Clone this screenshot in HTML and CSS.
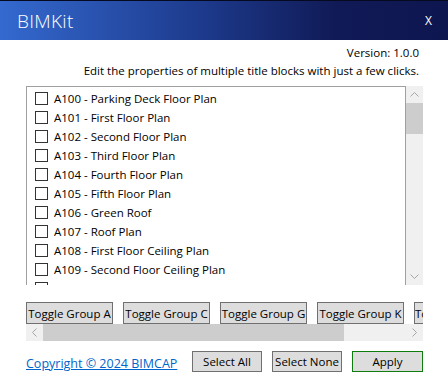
FILE: index.html
```html
<!DOCTYPE html>
<html lang="en">
<head>
  <meta charset="UTF-8">
  <title>BIMKit</title>
  <link rel="stylesheet" href="styles.css">
</head>
<body>

<header class="titlebar">
  <span class="app-name">BIMKit</span>
  <span class="close">X</span>
</header>

<main class="content">
  <div class="info">
    <p>Version: 1.0.0</p>
    <p>Edit the properties of multiple title blocks with just a few clicks.</p>
  </div>

  <div class="sheets">
    <ul class="sheet-list">
      <li><span class="box"></span>A100 - Parking Deck Floor Plan</li>
      <li><span class="box"></span>A101 - First Floor Plan</li>
      <li><span class="box"></span>A102 - Second Floor Plan</li>
      <li><span class="box"></span>A103 - Third Floor Plan</li>
      <li><span class="box"></span>A104 - Fourth Floor Plan</li>
      <li><span class="box"></span>A105 - Fifth Floor Plan</li>
      <li><span class="box"></span>A106 - Green Roof</li>
      <li><span class="box"></span>A107 - Roof Plan</li>
      <li><span class="box"></span>A108 - First Floor Ceiling Plan</li>
      <li><span class="box"></span>A109 - Second Floor Ceiling Plan</li>
      <li><span class="box"></span>A110 - Third Floor Ceiling Plan</li>
      <li><span class="box"></span>A111 - Fourth Floor Ceiling Plan</li>
    </ul>
    <div class="vscroll">
      <span class="arrow"><svg width="9" height="5" viewBox="0 0 9 5"><path d="M0.5 4.5 L4.5 0.5 L8.5 4.5" fill="none" stroke="#a6a6a6"/></svg></span>
      <span class="vthumb"></span>
      <span class="vtrack"></span>
      <span class="arrow"><svg width="9" height="5" viewBox="0 0 9 5"><path d="M0.5 0.5 L4.5 4.5 L8.5 0.5" fill="none" stroke="#a6a6a6"/></svg></span>
    </div>
  </div>

  <div class="groups">
    <div class="group-row">
      <button class="btn toggle">Toggle Group A</button>
      <button class="btn toggle">Toggle Group C</button>
      <button class="btn toggle">Toggle Group G</button>
      <button class="btn toggle">Toggle Group K</button>
      <button class="btn toggle">Toggle Group M</button>
    </div>
    <div class="hscroll">
      <span class="arrow"><svg width="5" height="9" viewBox="0 0 5 9"><path d="M4.5 0.5 L0.5 4.5 L4.5 8.5" fill="none" stroke="#a6a6a6"/></svg></span>
      <span class="hthumb"></span>
      <span class="htrack"></span>
      <span class="arrow"><svg width="5" height="9" viewBox="0 0 5 9"><path d="M0.5 0.5 L4.5 4.5 L0.5 8.5" fill="none" stroke="#a6a6a6"/></svg></span>
    </div>
  </div>

  <footer class="actions">
    <a href="#" class="copyright">Copyright © 2024 BIMCAP</a>
    <div class="action-buttons">
      <button class="btn small">Select All</button>
      <button class="btn small">Select None</button>
      <button class="btn small apply">Apply</button>
    </div>
  </footer>
</main>

</body>
</html>
```

FILE: styles.css
```css
body {
  margin: 0;
  width: 448px;
  height: 380px;
  overflow: hidden;
  background-color: #ffffff;
  font-family: 'Open Sans', 'Noto Sans', sans-serif;
  font-size: 12px;
  color: #000;
}
.titlebar {
  height: 39px;
  border-top: 1px solid #050a20;
  background: linear-gradient(to right, #3469cf 0%, #1d3a8c 45%, #101a56 75%, #0e1650 100%);
  color: #ffffff;
  display: flex;
  align-items: center;
  justify-content: space-between;
  padding: 0 16px 0 17px;
}
.app-name {
  font-size: 19px;
  font-weight: 300;
  letter-spacing: 0.3px;
}
.close {
  font-size: 12px;
}
.content {
  padding: 0 25px 0 26px;
}
.info {
  margin-top: 4px;
  padding-right: 4px;
  text-align: right;
  font-size: 11.5px;
}
.info p {
  margin: 0;
  line-height: 18px;
}
.sheets {
  display: flex;
  margin-top: 6px;
  height: 199px;
}
.sheet-list {
  list-style: none;
  margin: 0;
  padding: 2px 0 0 0;
  width: 378px;
  border: 1px solid #a0a0a0;
  border-bottom: none;
  overflow: hidden;
}
.sheet-list li {
  height: 19px;
  display: flex;
  align-items: center;
  padding-left: 8px;
  font-size: 11.5px;
  white-space: nowrap;
}
.box {
  width: 11px;
  height: 11px;
  border: 1px solid #333333;
  margin-right: 6px;
  flex-shrink: 0;
}
.vscroll {
  width: 17px;
  display: flex;
  flex-direction: column;
  background-color: #f0f0f0;
}
.vscroll .arrow {
  height: 17px;
  display: flex;
  align-items: center;
  justify-content: center;
}
.vthumb {
  height: 31px;
  background-color: #cdcdcd;
}
.vtrack {
  flex: 1;
}
.groups {
  margin-top: 17px;
  width: 397px;
}
.group-row {
  display: flex;
  gap: 10px;
  overflow: hidden;
  height: 22px;
}
.btn {
  font-family: 'Open Sans', 'Noto Sans', sans-serif;
  font-size: 11.5px;
  background-color: #dddddd;
  border: 1px solid #707070;
  color: #000;
  padding: 0;
  margin: 0;
  height: 22px;
  white-space: nowrap;
  overflow: hidden;
  flex-shrink: 0;
}
.btn.toggle {
  width: 87px;
}
.hscroll {
  display: flex;
  height: 17px;
  background-color: #f0f0f0;
}
.hscroll .arrow {
  width: 17px;
  display: flex;
  align-items: center;
  justify-content: center;
}
.hthumb {
  width: 301px;
  background-color: #cdcdcd;
}
.htrack {
  flex: 1;
}
.actions {
  margin-top: 10px;
  width: 397px;
  display: flex;
  justify-content: space-between;
  align-items: center;
}
.copyright {
  color: #0066cc;
  font-size: 12.5px;
  text-decoration: underline;
  padding-top: 3px;
}
.action-buttons {
  display: flex;
  gap: 10px;
}
.btn.small {
  height: 21px;
  width: 70px;
}
.btn.apply {
  width: 71px;
  border-color: #107c10;
}
```
